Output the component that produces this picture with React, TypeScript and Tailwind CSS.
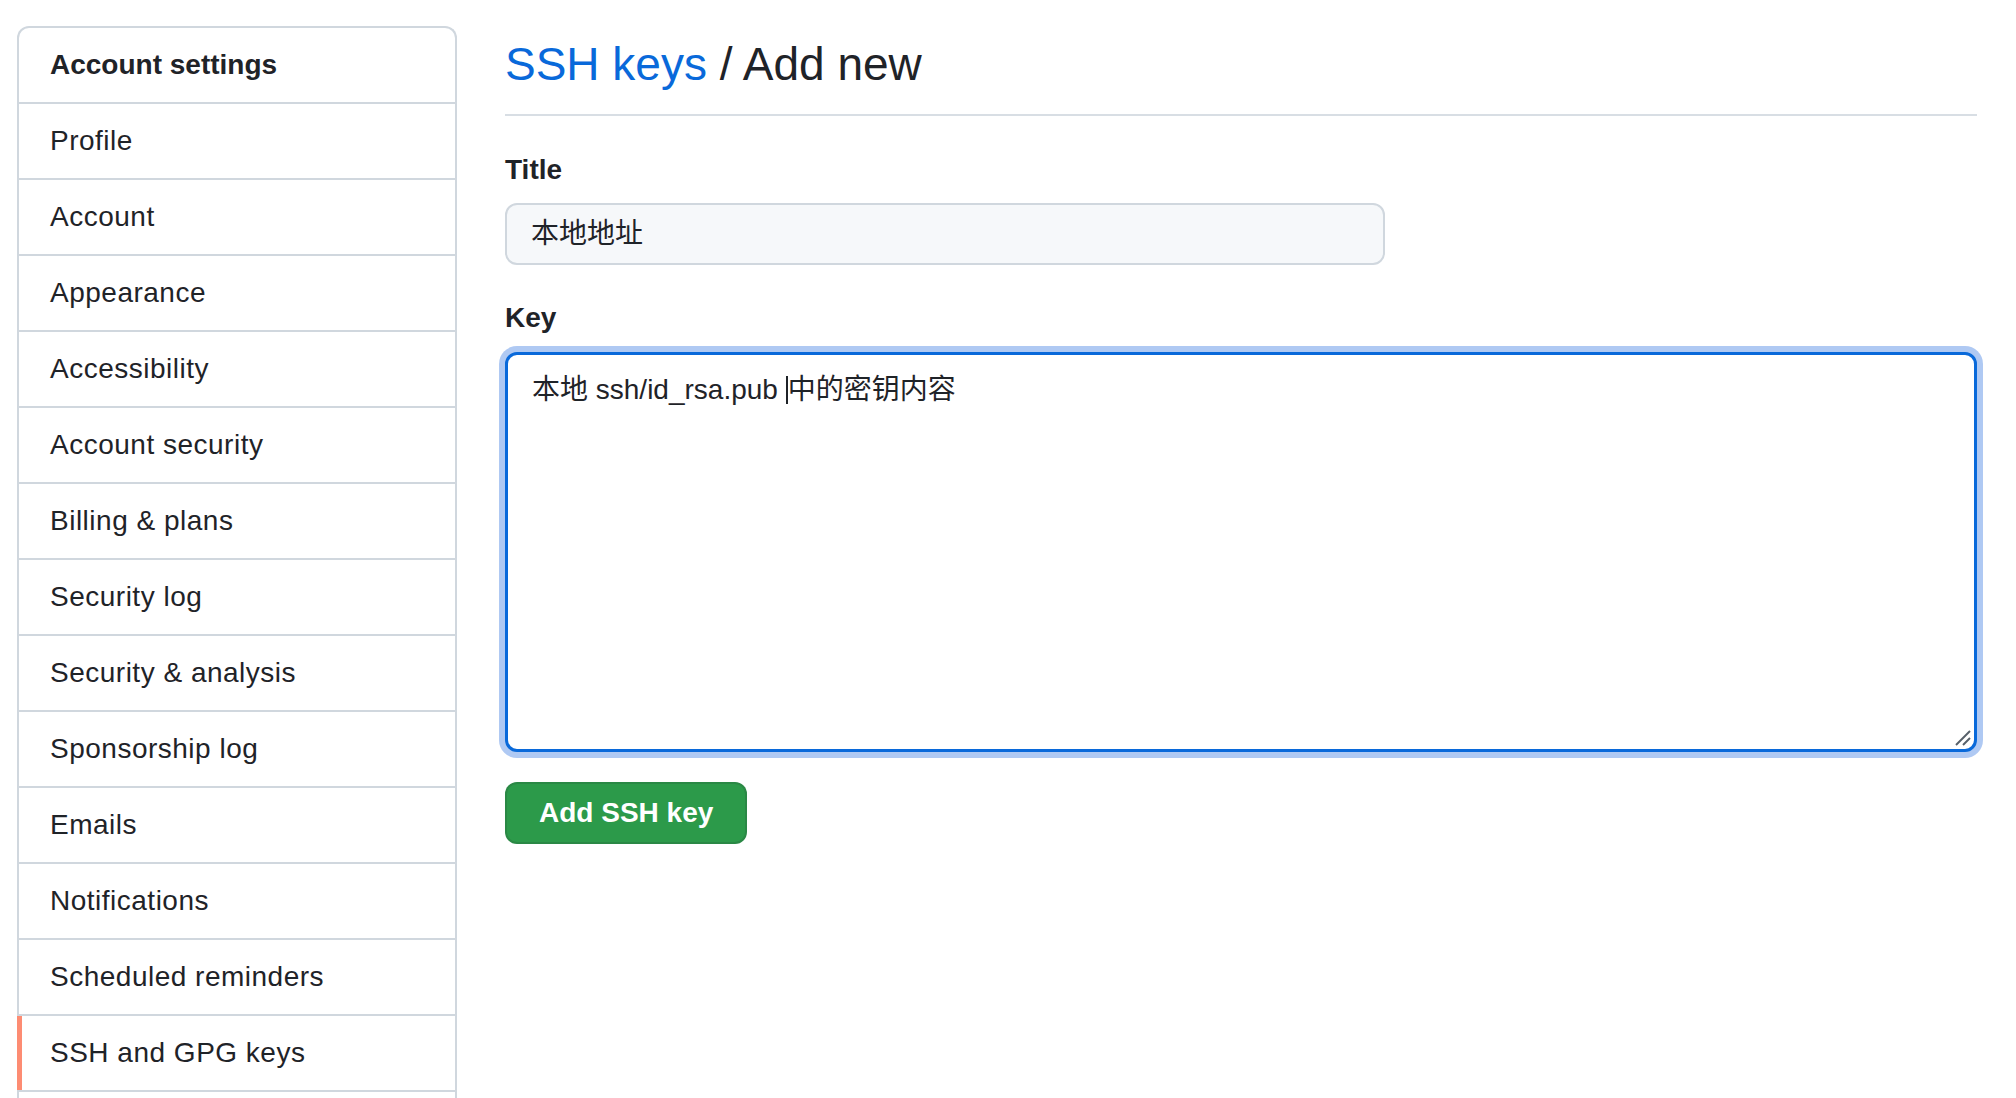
import React from "react";

const font = { fontFamily: '"Liberation Sans", "Noto Sans CJK SC", sans-serif' };

const navItems = [
  "Profile",
  "Account",
  "Appearance",
  "Accessibility",
  "Account security",
  "Billing & plans",
  "Security log",
  "Security & analysis",
  "Sponsorship log",
  "Emails",
  "Notifications",
  "Scheduled reminders",
  "SSH and GPG keys",
];

const Sidebar = () => (
  <nav className="w-[440px] shrink-0 self-start rounded-t-[12px] border-2 border-b-0 border-[#d0d7de] bg-white">
    <div className="flex h-[74px] items-center pl-[31px] text-[28px] font-bold text-[#1f2328]">
      Account settings
    </div>
    {navItems.map((item) => {
      const active = item === "SSH and GPG keys";
      return (
        <div
          key={item}
          className="relative flex h-[76px] items-center border-t-2 border-[#d0d7de] pl-[31px] text-[28px] tracking-[0.5px] text-[#1f2328]"
        >
          {active && <span className="absolute left-[-2px] top-0 bottom-0 w-[5px] bg-[#fd8c73]" />}
          {item}
        </div>
      );
    })}
    {/* next row, below the fold */}
    <div className="h-[40px] border-t-2 border-[#d0d7de]" />
  </nav>
);

export default function App() {
  return (
    <div className="h-screen overflow-hidden bg-white" style={font}>
      <div className="flex gap-[48px] pl-[17px] pt-[26px]">
        <Sidebar />

        <main className="flex w-[1472px] flex-col pt-[8px]">
          {/* Subhead */}
          <div className="border-b-2 border-[#d8dee4] pb-[20px]">
            <h2 className="text-[46px] font-normal leading-[60px] text-[#1f2328]">
              <a href="#" className="text-[#0969da]">
                SSH keys
              </a>{" "}
              / Add new
            </h2>
          </div>

          {/* Title */}
          <label className="mt-[33px] block text-[28px] font-bold leading-[42px] text-[#1f2328]">Title</label>
          <div className="mt-[12px] flex h-[62px] w-[880px] items-center rounded-[12px] border-2 border-[#d0d7de] bg-[#f6f8fa] px-[24px] text-[28px] text-[#1f2328]">
            本地地址
          </div>

          {/* Key */}
          <label className="mt-[32px] block text-[28px] font-bold leading-[42px] text-[#1f2328]">Key</label>
          <div className="relative mt-[13px] h-[400px] w-full rounded-[12px] border-[3px] border-[#0969da] bg-white px-[24px] pt-[14px] text-[28px] leading-[42px] text-[#1f2328] shadow-[0_0_0_6px_#afc9f3]">
            <span>本地 ssh/id_rsa.pub </span>
            <span className="inline-block h-[28px] w-[2px] bg-[#1f2328] align-[-5px]" />
            <span>中的密钥内容</span>
            <svg
              className="absolute bottom-[2px] right-[2px]"
              width="18"
              height="18"
              viewBox="0 0 18 18"
              fill="none"
              stroke="#57606a"
              strokeWidth="2"
            >
              <line x1="2" y1="16" x2="16" y2="2" />
              <line x1="9" y1="16" x2="16" y2="9" />
            </svg>
          </div>

          {/* Button */}
          <div className="mt-[30px]">
            <button className="h-[62px] rounded-[12px] border-2 border-[#1f232826] bg-[#2c9a4a] px-[32px] text-[28px] font-bold text-white">
              Add SSH key
            </button>
          </div>
        </main>
      </div>
    </div>
  );
}
